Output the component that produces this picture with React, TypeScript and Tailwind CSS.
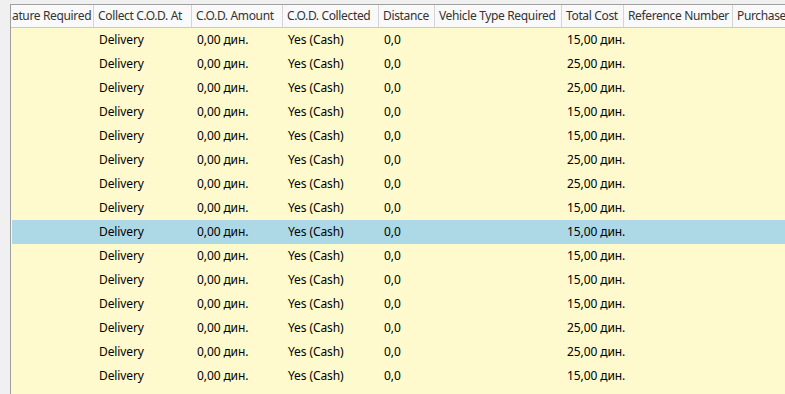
const columns = [
  { title: "ature Required", width: 83 },
  { title: "Collect C.O.D. At", width: 98 },
  { title: "C.O.D. Amount", width: 91 },
  { title: "C.O.D. Collected", width: 96 },
  { title: "Distance", width: 56 },
  { title: "Vehicle Type Required", width: 127 },
  { title: "Total Cost", width: 62 },
  { title: "Reference Number", width: 109 },
  { title: "Purchase", width: 120 },
];

const costs = [15, 25, 25, 15, 15, 25, 25, 15, 15, 15, 15, 15, 25, 25, 15];

const gridCols = "grid grid-cols-[83px_98px_91px_96px_56px_127px_62px_109px_120px]";

const App = () => {
  return (
    <div
      className="w-[785px] h-[394px] overflow-hidden bg-[#f0f0f0] flex text-[12px]"
      style={{ fontFamily: '"Noto Sans", "Open Sans", sans-serif' }}
    >
      <div className="w-[10px] shrink-0" />
      <div className="flex-1 flex flex-col mt-[4px] border-l border-t border-[#a0a0a0] bg-[#fffacd] overflow-hidden">
        <div className={`${gridCols} h-[23px] bg-[#f9f9f9] border-b border-[#c8c8c8] shrink-0`}>
          {columns.map((col, i) => (
            <div
              key={i}
              className={`border-r border-[#d5d5d5] ${
                i === 0 ? "pl-[1px]" : "px-[4px]"
              } flex items-center whitespace-nowrap overflow-hidden text-[#333333] tracking-[-0.35px]`}
            >
              {col.title}
            </div>
          ))}
        </div>
        <div className="pl-[1px]">
          {costs.map((cost, i) => (
            <div
              key={i}
              className={`${gridCols} h-[24px] items-center whitespace-nowrap text-black tracking-[-0.1px] ${
                i === 8 ? "bg-[#add8e6]" : ""
              }`}
            >
              <div />
              <div className="px-[4px]">Delivery</div>
              <div className="px-[4px]">0,00 дин.</div>
              <div className="px-[4px]">Yes (Cash)</div>
              <div className="px-[4px]">0,0</div>
              <div />
              <div className="px-[4px]">{cost},00 дин.</div>
              <div />
              <div />
            </div>
          ))}
        </div>
      </div>
    </div>
  );
};

export default App;
